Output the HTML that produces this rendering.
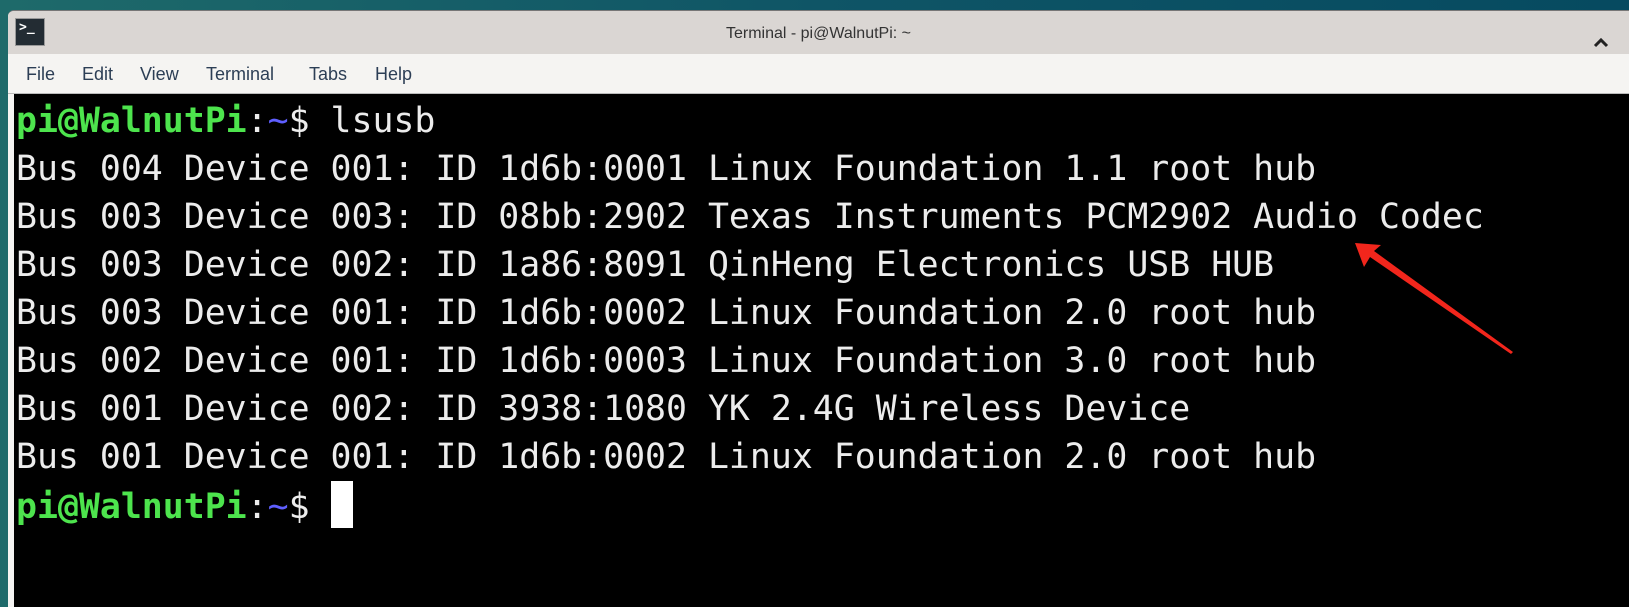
<!DOCTYPE html>
<html><head><style>
body{margin:0;width:1629px;height:607px;overflow:hidden;background:linear-gradient(90deg,#1e6a6a,#0f5566 50%,#064a60);position:relative;font-family:"Liberation Sans",sans-serif}
.win{position:absolute;left:8px;top:10px;right:0;bottom:0;background:#f5f4f2;border-top-left-radius:6px;border-top:1px solid #777}
.title{position:absolute;left:0;right:0;top:0;height:43px;background:#dad6d3;border-top-left-radius:6px}
.title .t{position:absolute;left:0;right:0;top:14px;text-align:center;font-size:16px;color:#333}
.icon{position:absolute;left:7px;top:7px;width:30px;height:28px;background:#232c33;border:1px solid #999;color:#fff;font:bold 13px "DejaVu Sans Mono",monospace;line-height:18px;padding-left:3px;box-sizing:border-box}
.menu{position:absolute;top:43px;left:0;right:0;height:39px;border-bottom:1px solid #bbb}
.menu span{position:absolute;top:10px;font-size:18px;color:#2c3e55}
.term{position:absolute;left:6px;top:83px;right:0;bottom:0;background:#000;padding:3px 0 0 2px;font:34.85px/48px "DejaVu Sans Mono",monospace;color:#ececec;white-space:pre}
.g{color:#4de44d;font-weight:bold}.b{color:#5f5fff}
.cur{display:inline-block;width:22px;height:47px;background:#fff;vertical-align:-10px}
</style></head><body>
<div class="win">
<div class="title"><div class="icon">&gt;_</div><div class="t">Terminal - pi@WalnutPi: ~</div>
<svg style="position:absolute;left:1585px;top:27px" width="16" height="10"><path d="M2 8 L8 2 L14 8" stroke="#222" stroke-width="3" fill="none"/></svg></div>
<div class="menu"><span style="left:18px">File</span><span style="left:74px">Edit</span><span style="left:132px">View</span><span style="left:198px">Terminal</span><span style="left:301px">Tabs</span><span style="left:367px">Help</span></div>
<div class="term"><span class="g">pi@WalnutPi</span>:<span class="b">~</span>$ lsusb
Bus 004 Device 001: ID 1d6b:0001 Linux Foundation 1.1 root hub
Bus 003 Device 003: ID 08bb:2902 Texas Instruments PCM2902 Audio Codec
Bus 003 Device 002: ID 1a86:8091 QinHeng Electronics USB HUB
Bus 003 Device 001: ID 1d6b:0002 Linux Foundation 2.0 root hub
Bus 002 Device 001: ID 1d6b:0003 Linux Foundation 3.0 root hub
Bus 001 Device 002: ID 3938:1080 YK 2.4G Wireless Device
Bus 001 Device 001: ID 1d6b:0002 Linux Foundation 2.0 root hub
<span class="g">pi@WalnutPi</span>:<span class="b">~</span>$ <span class="cur"></span></div>
</div>
<svg style="position:absolute;left:0;top:0" width="1629" height="607"><polygon points="1355,243 1381,245 1374,251 1513,352 1511,354 1370,257 1364,267" fill="#f2261c"/></svg>
</body></html>
